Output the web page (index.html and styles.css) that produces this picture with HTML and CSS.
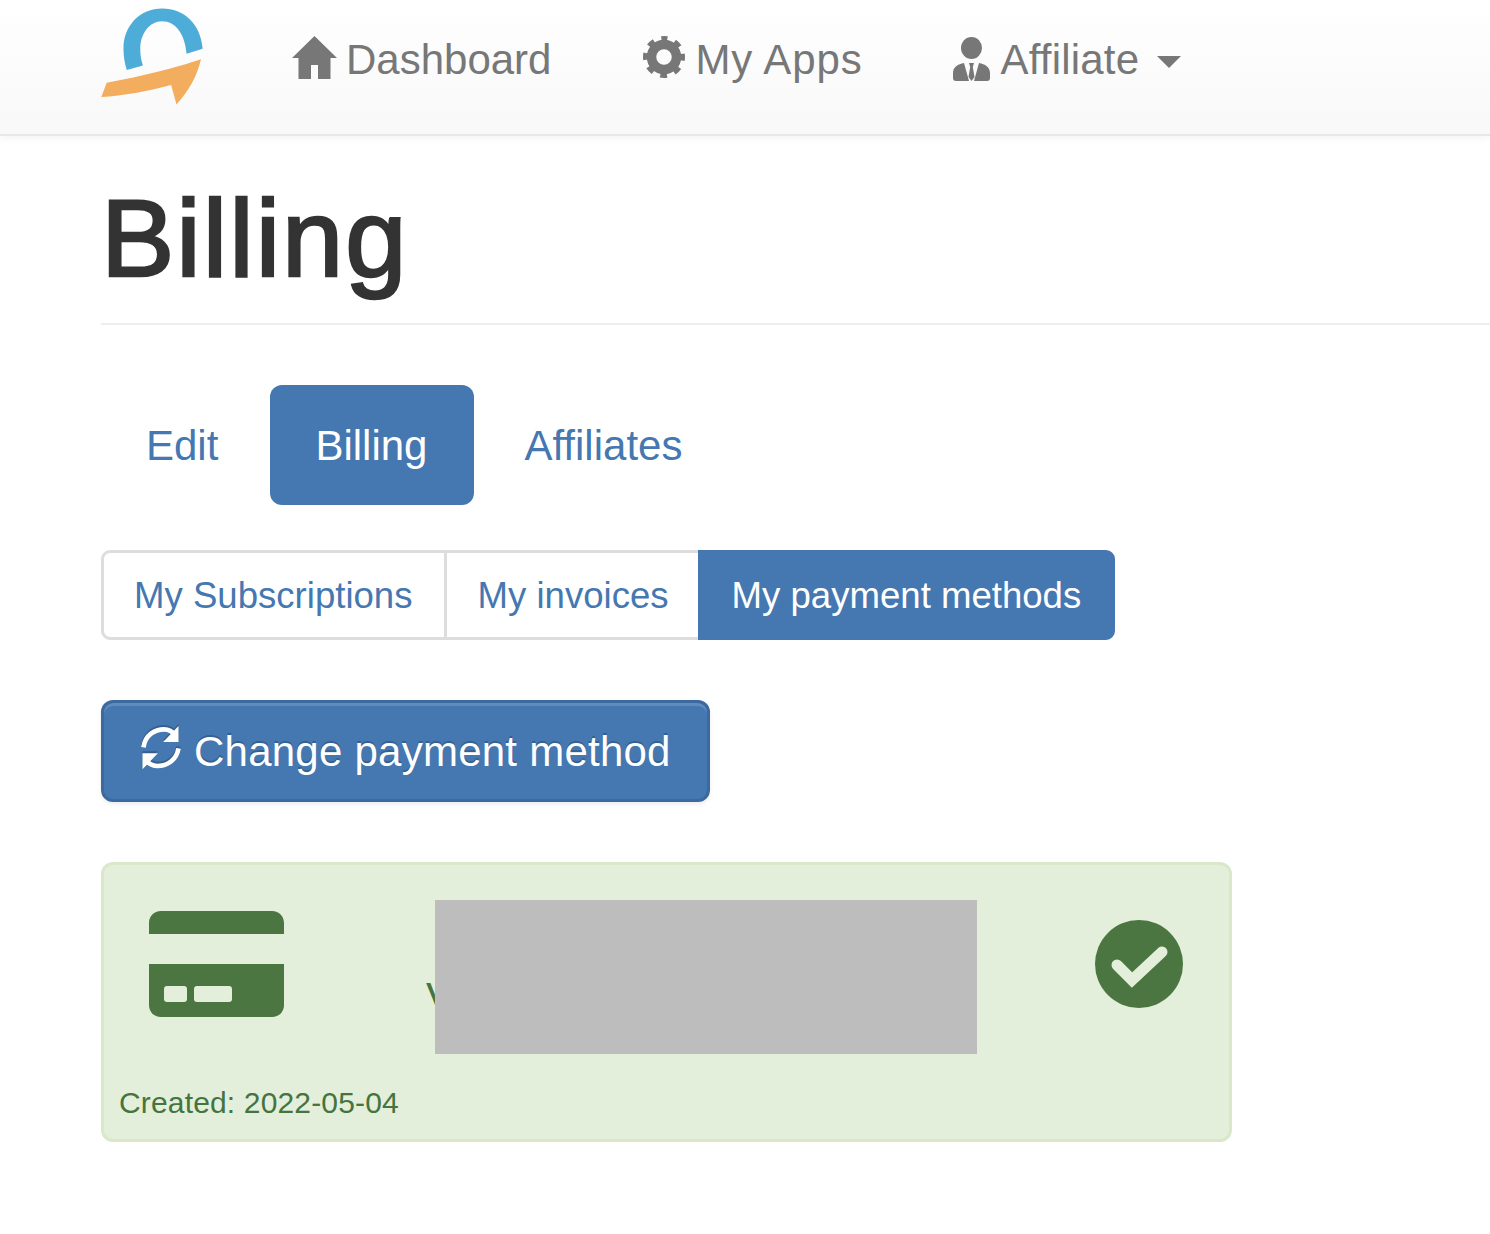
FILE: index.html
```html
<!DOCTYPE html>
<html lang="en">
<head>
<meta charset="utf-8">
<title>Billing</title>
<link rel="stylesheet" href="styles.css">
</head>
<body>
<nav class="navbar">
  <svg class="logo" viewBox="33 24 304 288" aria-label="Logo">
    <path fill="#4eadd8" d="M336 145C330 70 280 25 215 25C150 25 100 75 100 145C100 165 103 188 110 208L158 195C152 178 150 160 150 145C150 100 178 63 215 63C255 63 283 100 288 160Z"/>
    <path fill="#f2ae5e" d="M331 176C260 200 150 228 50 246L34 289C100 285 170 272 242 253L258 311C295 270 320 225 331 176Z"/>
  </svg>
  <a class="nav-item nav-first">
    <svg class="ico-home" viewBox="0 0 45 43"><path fill="#777" d="M22.5 0L45 22H38.5V43H26V29H19V43H6.500V22H0Z"/></svg>
    <span>Dashboard</span>
  </a>
  <a class="nav-item nav-apps">
    <svg class="ico-gear" viewBox="0 0 42 42"><circle cx="21" cy="21" r="12.500" fill="none" stroke="#777" stroke-width="9.500"/><circle cx="21" cy="21" r="17.500" fill="none" stroke="#777" stroke-width="7" stroke-dasharray="6.500 7.244" stroke-dashoffset="3.250" transform="rotate(-90 21 21)"/></svg>
    <span>My Apps</span>
  </a>
  <a class="nav-item nav-aff">
    <svg class="ico-user" viewBox="0 0 37 44"><ellipse cx="18.500" cy="11" rx="10.500" ry="11" fill="#777"/><path fill="#777" d="M11 26L16 44H3C1 44 0 43 0 41V36C0 30 5 27 11 26ZM26 26C32 27 37 30 37 36V41C37 43 36 44 34 44H21ZM16 26H21L19.800 30L21.500 40L18.500 44L15.500 40L17.200 30Z"/></svg>
    <span>Affiliate</span>
    <i class="caret"></i>
  </a>
</nav>
<main class="page">
  <header class="page-header"><h1>Billing</h1></header>
  <ul class="pills">
    <li class="pill">Edit</li>
    <li class="pill pill-active">Billing</li>
    <li class="pill">Affiliates</li>
  </ul>
  <div class="btn-group">
    <a class="seg seg-first">My Subscriptions</a>
    <a class="seg seg-mid">My invoices</a>
    <a class="seg seg-active">My payment methods</a>
  </div>
  <a class="btn-primary">
    <svg class="ico-refresh" viewBox="150 105 125 135"><path fill="none" stroke="#fff" stroke-width="14" d="M163 172C168 135 197 118 225 118C240 118 250 125 258 136M268 175C262 210 235 228 205 228C190 228 180 222 170 212"/><path fill="#fff" d="M268 108V156H222ZM160 238V190H206Z"/></svg>
    <span class="btn-label">Change payment method</span>
  </a>
  <section class="card">
    <div class="card-row">
      <svg class="ico-card" viewBox="0 0 135 106"><path fill="#4b7541" d="M12 0H123C130 0 135 5 135 12V23H0V12C0 5 5 0 12 0ZM0 53H135V94C135 101 130 106 123 106H12C5 106 0 101 0 94ZM18 75C16 75 15 76 15 78V88C15 90 16 91 18 91H35C37 91 38 90 38 88V78C38 76 37 75 35 75ZM48 75C46 75 45 76 45 78V88C45 90 46 91 48 91H80C82 91 83 90 83 88V78C83 76 82 75 80 75Z"/></svg>
      <span class="card-name">Visa</span>
      <svg class="ico-check" viewBox="0 0 88 88"><circle cx="44" cy="44" r="44" fill="#4b7541"/><path fill="none" stroke="#e3efda" stroke-width="11" stroke-linecap="round" d="M22 45L37 60L67 32"/></svg>
    </div>
    <div class="redaction"></div>
    <p class="created">Created: 2022-05-04</p>
  </section>
</main>
</body>
</html>
```
FILE: styles.css
```css
* { box-sizing: border-box; }
html, body { margin: 0; padding: 0; }
body {
  background: #fff;
  color: #333;
  font-family: "Liberation Sans", Arial, sans-serif;
  font-size: 42px;
  height: 1234px;
  overflow: hidden;
}
.navbar {
  display: flex;
  align-items: flex-start;
  height: 136px;
  padding-left: 101px;
  background: linear-gradient(to bottom, #fff 0, #f8f8f8 100%);
  border-bottom: 2px solid #e7e7e7;
  box-shadow: 0 2px 8px rgba(0, 0, 0, .05);
}
.logo { width: 102px; height: 97px; margin-top: 8px; flex: none; }
.nav-item {
  display: flex;
  align-items: center;
  color: #777;
  height: 48px;
  margin-top: 36px;
  line-height: 48px;
}
.nav-first { margin-left: 89px; }
.nav-apps { margin-left: 92px; letter-spacing: .85px; }
.nav-aff { margin-left: 90px; letter-spacing: .2px; }
.ico-home { width: 45px; height: 43px; margin-right: 9px; margin-top: -6px; }
.ico-gear { width: 42px; height: 42px; margin-right: 10px; margin-top: -6px; }
.ico-user { width: 37px; height: 44px; margin-right: 11px; margin-top: -2px; }
.caret {
  width: 0;
  height: 0;
  margin-left: 18px;
  border-top: 12px solid #777;
  border-left: 12px solid transparent;
  border-right: 12px solid transparent;
  margin-top: 4px;
}
.page { padding-left: 101px; }
.page-header { border-bottom: 2px solid #eee; height: 189px; }
h1 {
  margin: 0;
  padding-top: 37px;
  font-size: 110px;
  font-weight: 400;
  line-height: 130px;
  letter-spacing: 2px;
  -webkit-text-stroke: 2.5px #333;
}
.pills { display: flex; gap: 5px; list-style: none; margin: 60px 0 0; padding: 0; }
.pill {
  height: 120px;
  padding: 0 47px 0 45px;
  line-height: 122px;
  color: #4577b0;
  border-radius: 12px;
}
.pill-active { background: #4577b0; color: #fff; }
.btn-group { display: flex; margin-top: 45px; font-size: 36.6px; height: 90px; }
.seg { line-height: 86px; color: #4577b0; border: 3px solid #ddd; padding: 0 31px 0 30px; }
.seg-first { border-radius: 9px 0 0 9px; }
.seg-mid { border-left: 0; border-right: 0; padding: 0 29px 0 31px; }
.seg-active {
  background: #4577b0;
  border-color: #4577b0;
  color: #fff;
  border-radius: 0 9px 9px 0;
  padding: 0 31px;
}
.btn-primary {
  display: flex;
  align-items: center;
  width: 609px;
  height: 102px;
  margin-top: 60px;
  padding-left: 35px;
  padding-top: 2px;
  background: #4577b0;
  color: #fff;
  border: 3px solid #3c6a9f;
  border-radius: 12px;
  box-shadow: inset 0 3px 0 rgba(255, 255, 255, .15), 0 2px 4px rgba(0, 0, 0, .08);
  text-shadow: 0 -2px 0 rgba(0, 0, 0, .2);
}
.btn-label { letter-spacing: .24px; }
.ico-refresh {
  width: 42px;
  height: 45px;
  margin-right: 13px;
  margin-top: -9px;
  filter: drop-shadow(0 -2px 0 rgba(0, 0, 0, .2));
}
.card {
  position: relative;
  width: 1131px;
  height: 280px;
  margin-top: 60px;
  padding: 46px 15px 0;
  background: #e3efda;
  border: 3px solid #d9e8c9;
  border-radius: 12px;
  color: #45743f;
}
.card-row { display: flex; align-items: flex-start; height: 174px; }
.ico-card { width: 135px; height: 106px; margin-left: 30px; flex: none; }
.card-name { margin-left: 142px; margin-top: 63px; line-height: 48px; }
.ico-check { width: 88px; height: 88px; margin-left: auto; margin-right: 31px; margin-top: 9px; }
.redaction {
  position: absolute;
  left: 331px;
  top: 35px;
  width: 542px;
  height: 154px;
  background: #bdbdbd;
}
.created { margin: 0; font-size: 30px; line-height: 36px; letter-spacing: .16px; }
```
